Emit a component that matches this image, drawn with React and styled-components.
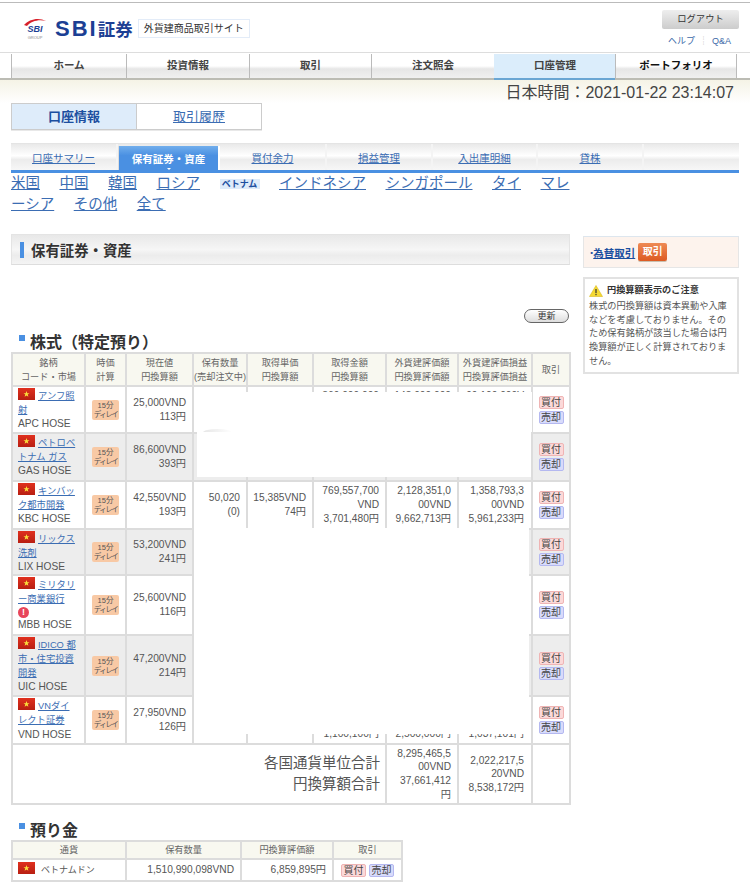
import React from 'react';
import styled, { createGlobalStyle } from 'styled-components';

const GlobalStyle = createGlobalStyle`
    html, body {
        margin: 0;
        padding: 0;
        background: #fff;
    }
    body {
        font-family: "Liberation Sans", "Noto Sans CJK JP", sans-serif;
        color: #555;
    }
`;

const Page = styled.div`
    width: 750px;
    height: 889px;
    overflow: hidden;
    border-top: 1px solid #bbb;
    margin-top: 2px;
    box-sizing: border-box;
`;

const Header = styled.header`
    display: flex;
    justify-content: space-between;
    height: 49px;
    padding: 0 11px 0 23px;
`;

const Brand = styled.div`
    display: flex;
    align-items: center;
    padding-top: 2px;
    gap: 4px;
`;

const BrandName = styled.span`
    font-size: 22px;
    font-weight: bold;
    color: #1c3f94;
    letter-spacing: 2px;
    margin-left: 4px;
    white-space: nowrap;
`;

const BrandKanji = styled.span`
    font-size: 17.5px;
    letter-spacing: 0;
`;

const SiteBadge = styled.span`
    font-size: 10px;
    color: #333;
    border: 1px solid #e3ecf8;
    padding: 2px 5px;
    margin-left: 1px;
    line-height: 13px;
`;

const HeaderRight = styled.div`
    display: flex;
    flex-direction: column;
    align-items: flex-end;
    padding-top: 7px;
`;

const LogoutButton = styled.div`
    width: 77px;
    height: 19px;
    line-height: 19px;
    text-align: center;
    font-size: 9.3px;
    color: #333;
    background: linear-gradient(#eee, #ccc);
    border-radius: 2px;
`;

const HelpLinks = styled.div`
    margin-top: 5px;
    margin-right: 8px;
    font-size: 9px;
    color: #3d6aa8;
    span {
        color: #bbb;
        margin: 0 4px;
    }
`;

const GlobalNav = styled.nav`
    display: flex;
    height: 25px;
    padding-left: 11px;
    border-top: 1px solid #ddd;
    border-bottom: 2px solid #bcbcb4;
`;

const NavItem = styled.div`
    width: ${props => props.$width}px;
    box-sizing: border-box;
    margin-top: 1px;
    text-align: center;
    line-height: 22px;
    font-size: 10.5px;
    font-weight: bold;
    color: ${props => props.$strong ? '#111' : '#444'};
    background: ${props => props.$active
        ? '#dbedfb'
        : 'linear-gradient(#fff 0, #fff 50%, #e6e6e6 62%, #f0f0f0 100%)'};
    border-left: 1px solid ${props => props.$active ? '#dbedfb' : '#bbb'};
    border-right: ${props => props.$last ? '1px solid #bbb' : 'none'};
    box-shadow: ${props => props.$active ? '0 2px 0 #6aa6d3' : 'none'};
`;

const TimeBar = styled.div`
    height: 23px;
    padding-right: 16px;
    text-align: right;
    font-size: 16px;
    line-height: 25px;
    color: #444;
    background: linear-gradient(#f5f3e6, #fff);
`;

const AccountTabs = styled.div`
    display: flex;
    width: 251px;
    height: 27px;
    margin: 0 0 13px 11px;
    box-sizing: border-box;
    border: 1px solid #ccc;
    box-shadow: 0 1px 0 #e8e8e8;
`;

const AccountTab = styled.div`
    width: ${props => props.$width}px;
    box-sizing: border-box;
    text-align: center;
    font-size: 13px;
    line-height: 25px;
    ${props => props.$active
        ? 'font-weight: bold; color: #1c4fa0; background: #deecfa; border-right: 1px solid #ccc;'
        : 'color: #3b6db3; text-decoration: underline;'}
`;

const SubNav = styled.div`
    display: flex;
    width: 728px;
    height: 30px;
    margin-left: 11px;
    box-sizing: border-box;
    border-top: 1px solid #e4e4e4;
    border-bottom: 3px solid #4a90e2;
    background: linear-gradient(#e9e9e9, #fff 45%, #ececec 60%, #f7f7f7);
`;

const SubNavItem = styled.div`
    width: ${props => props.$width}px;
    box-sizing: border-box;
    text-align: center;
    font-size: 10.5px;
    line-height: 28px;
    ${props => props.$active
        ? `margin-top: 2px; line-height: 27px; color: #fff; font-weight: bold; position: relative;
           background: linear-gradient(#71aeec, #4a90e2 40%);
           &::after {
               content: '';
               position: absolute;
               left: 50%;
               bottom: 0;
               margin-left: -2px;
               border: 2px solid transparent;
               border-top-color: #fff;
               border-bottom: none;
           }`
        : 'color: #3b6db3; text-decoration: underline;'}
    border-right: ${props => props.$active ? '2px solid #fff' : '2px solid #f4f4f4'};
    border-left: ${props => props.$active ? '1px solid #ddd' : 'none'};
`;

const CountryLinks = styled.div`
    margin: 0 0 0 11px;
    width: 562px;
    height: 61px;
    padding-top: 0;
    font-size: 14.5px;
    line-height: 20.5px;
`;

const CountryLink = styled.a`
    color: #3b6db3;
    text-decoration: underline;
    margin-right: 19.5px;
`;

const CurrentCountry = styled.span`
    display: inline-block;
    width: 40px;
    margin-right: 19.5px;
    font-size: 9px;
    line-height: 10px;
    font-weight: bold;
    text-align: center;
    color: #1c4fa0;
    background: #deebfa;
    vertical-align: 1px;
`;

const Columns = styled.div`
    display: flex;
    gap: 13px;
    padding-left: 11px;
`;

const MainColumn = styled.main`
    width: 559px;
    flex: none;
`;

const SideColumn = styled.aside`
    width: 156px;
    flex: none;
    padding-top: 2px;
`;

const TitleBar = styled.h1`
    display: flex;
    align-items: center;
    gap: 7px;
    height: 31px;
    margin: 0;
    padding-left: 8px;
    box-sizing: border-box;
    font-size: 14.4px;
    font-weight: bold;
    color: #333;
    border: 1px solid #e4e4e4;
    border-bottom-color: #ddd;
    background: linear-gradient(#e8e8e8, #f6f6f6 50%, #ececec 70%, #f4f4f4);
    &::before {
        content: '';
        width: 4px;
        height: 16px;
        background: #4a90e2;
    }
`;

const RefreshRow = styled.div`
    display: flex;
    justify-content: flex-end;
    padding: 44px 1px 0 0;
`;

const RefreshButton = styled.div`
    width: 45px;
    height: 14px;
    box-sizing: border-box;
    border: 1px solid #666;
    border-radius: 8px;
    background: linear-gradient(#fff, #ddd);
    text-align: center;
    font-size: 9px;
    line-height: 12px;
    color: #333;
`;

const SectionTitle = styled.h2`
    position: relative;
    margin: ${props => props.$top}px 0 0;
    padding-left: 19px;
    font-size: 16px;
    line-height: 18px;
    font-weight: bold;
    color: #333;
    &::before {
        content: '';
        position: absolute;
        left: 8px;
        top: 1px;
        width: 6px;
        height: 6px;
        background: #4a90e2;
    }
`;

const TableWrap = styled.div`
    position: relative;
`;

const Table = styled.table`
    width: ${props => props.$width}px;
    table-layout: fixed;
    border-collapse: collapse;
    font-size: 10.2px;
    line-height: 13.7px;
    color: #555;
    th, td {
        border: 2px solid #dcdcdc;
        padding: 0 6px 0 5px;
        box-sizing: border-box;
    }
    th {
        background: #f8f8f0;
        font-weight: normal;
        text-align: center;
        font-size: 9.2px;
        line-height: 14px;
        padding: 0;
        white-space: nowrap;
        color: #666;
    }
`;

const Row = styled.tr`
    height: ${props => props.$height}px;
    background: ${props => props.$shade ? '#ededed' : '#fff'};
`;

const NameCell = styled.td`
    vertical-align: top;
    padding: 2px 6px 0 5px !important;
    word-break: break-all;
    font-size: 9.3px;
`;

const StockCode = styled.div`
    font-size: 10.2px;
`;

const CurrencyCell = styled.td`
    padding-left: 5px !important;
    font-size: 9px;
`;

const CurrencyName = styled.span`
    margin-left: 3px;
`;

const Flag = ({ className }) => (
    <svg className={className} viewBox="0 0 17 12" width="17" height="12">
        <defs>
            <linearGradient id="flagRed" x1="0" y1="0" x2="0" y2="1">
                <stop offset="0" stopColor="#e0301e" />
                <stop offset="1" stopColor="#b81f12" />
            </linearGradient>
        </defs>
        <rect width="17" height="12" fill="url(#flagRed)" />
        <path d="M8.5 3 9.3 5.2 11.5 5.2 9.7 6.6 10.4 8.8 8.5 7.5 6.6 8.8 7.3 6.6 5.5 5.2 7.7 5.2Z" fill="#fadf3c" />
    </svg>
);

const StyledFlag = styled(Flag)`
    display: inline-block;
    vertical-align: 1px;
    margin: -1px 3px -2px 0;
`;

const StockLink = styled.a`
    color: #3b6db3;
    text-decoration: underline;
`;

const WarnDot = styled.div`
    width: 11px;
    height: 11px;
    border-radius: 50%;
    background: #e8455a;
    color: #fff;
    font-size: 9px;
    line-height: 11px;
    font-weight: bold;
    text-align: center;
`;

const CenterCell = styled.td`
    text-align: center;
    padding: 0 !important;
`;

const DelayBadge = styled.div`
    width: 27px;
    margin: 0 auto;
    padding: 1px 0;
    border-radius: 2px;
    background: #f8c9a5;
    font-size: 7.5px;
    line-height: 9px;
    color: #555;
    white-space: nowrap;
`;

const DelayWord = styled.span`
    letter-spacing: -1.5px;
`;

const NumCell = styled.td`
    text-align: right;
    word-break: break-all;
    padding: ${props => props.$inset ? '0 7px 0 6px' : '0 6px 0 5px'} !important;
`;

const TradeStack = styled.div`
    display: flex;
    flex-direction: ${props => props.$row ? 'row' : 'column'};
    align-items: center;
    justify-content: center;
    gap: ${props => props.$row ? 3 : 2}px;
`;

const TradeButton = styled.span`
    display: block;
    width: 25px;
    height: 13px;
    box-sizing: border-box;
    border: 1px solid ${props => props.$sell ? '#b4b8f0' : '#efb4b4'};
    border-radius: 2px;
    background: ${props => props.$sell ? '#d8dbfb' : '#fbd9d9'};
    font-size: 10px;
    line-height: 11px;
    text-align: center;
    color: #444;
`;

const TotalLabel = styled.td`
    text-align: right;
    font-size: 14.5px;
    line-height: 21.5px;
    padding-right: 5px !important;
`;

const Mask = styled.div`
    position: absolute;
    left: ${props => props.$left}px;
    top: ${props => props.$top}px;
    width: ${props => props.$width}px;
    height: ${props => props.$height}px;
    background: #fff;
`;

const Smudge = styled.div`
    position: absolute;
    left: 9px;
    top: 37px;
    width: 29px;
    height: 7px;
    background: linear-gradient(100deg, #e6e6e6, #fff);
    border-radius: 50%;
`;

const FxBox = styled.div`
    display: flex;
    align-items: center;
    height: 32px;
    box-sizing: border-box;
    padding-left: 5px;
    border: 1px solid #e6e6e6;
    border-top-color: #dde6ee;
    background: #fdf3ed;
    font-size: 10.5px;
    font-weight: bold;
    color: #1c4fa0;
`;

const FxLink = styled.a`
    text-decoration: underline;
    color: #1c4fa0;
    margin: 0 3px 0 -1px;
`;

const FxButton = styled.span`
    width: 29px;
    height: 18px;
    line-height: 18px;
    text-align: center;
    font-size: 10px;
    border-radius: 2px;
    color: #fff;
    background: linear-gradient(#ee8a55, #dd5a22);
    box-shadow: 0 1px 0 #c9c0b0;
`;

const NoticeBox = styled.div`
    margin-top: 9px;
    height: 97px;
    box-sizing: border-box;
    padding: 5px 4px 0 4px;
    border: 2px solid #e2e2e2;
    font-size: 9.2px;
    line-height: 13.8px;
    color: #555;
`;

const NoticeTitle = styled.div`
    display: flex;
    align-items: center;
    gap: 4px;
    margin-bottom: 2px;
    font-weight: bold;
    color: #333;
`;

const WarningIcon = () => (
    <svg viewBox="0 0 14 12" width="14" height="12">
        <path d="M7 0.5 13.5 11.5H0.5Z" fill="#f5d932" stroke="#d8b820" strokeWidth="0.6" />
        <rect x="6.4" y="4" width="1.2" height="4.2" fill="#333" />
        <rect x="6.4" y="9" width="1.2" height="1.2" fill="#333" />
    </svg>
);

const SbiMark = () => (
    <svg viewBox="0 0 24 28" width="24" height="28">
        <path d="M1 10C6 4 16 2 23 6 16 4 8 6 4 11Z" fill="#d8202a" />
        <text x="12" y="17" textAnchor="middle" fontSize="9" fontStyle="italic" fontWeight="bold" fill="#1c3f94" fontFamily="Liberation Sans">SBI</text>
        <text x="12" y="24" textAnchor="middle" fontSize="4" fill="#888" fontFamily="Liberation Sans">GROUP</text>
    </svg>
);

const stocks = [
    {
        name: 'アンフ照射', code: 'APC HOSE', price: '25,000VND', yen: '113円', height: 47,
        cost: '369,000,000VND', costYen: '1,700,000円',
        value: '143,000,000VND', valueYen: '649,000円',
        gain: '99,100,000VND', gainYen: '450,000円',
    },
    { name: 'ペトロベトナム ガス', code: 'GAS HOSE', price: '86,600VND', yen: '393円', height: 48 },
    {
        name: 'キンバック都市開発', code: 'KBC HOSE', price: '42,550VND', yen: '193円', height: 48,
        qty: ['50,020', '(0)'], unit: ['15,385VND', '74円'],
        cost: '769,557,700VND', costYen: '3,701,480円',
        value: '2,128,351,000VND', valueYen: '9,662,713円',
        gain: '1,358,793,300VND', gainYen: '5,961,233円',
    },
    { name: 'リックス洗剤', code: 'LIX HOSE', price: '53,200VND', yen: '241円', height: 46 },
    { name: 'ミリタリー商業銀行', code: 'MBB HOSE', price: '25,600VND', yen: '116円', height: 60, warn: true },
    { name: 'IDICO 都市・住宅投資開発', code: 'UIC HOSE', price: '47,200VND', yen: '214円', height: 61 },
    {
        name: 'VNダイレクト証券', code: 'VND HOSE', price: '27,950VND', yen: '126円', height: 48,
        cost: '369,000,000VND', costYen: '1,100,100円',
        value: '1,143,000,000VND', valueYen: '2,500,000円',
        gain: '1,143,000,000VND', gainYen: '1,037,101円',
    },
];

const Trade = ({ row }) => (
    <TradeStack $row={row}>
        <TradeButton>買付</TradeButton>
        <TradeButton $sell>売却</TradeButton>
    </TradeStack>
);

const StockRow = ({ stock, shade }) => (
    <Row $height={stock.height} $shade={shade}>
        <NameCell>
            <StyledFlag />
            <StockLink>{stock.name}</StockLink>
            {stock.warn && <WarnDot>!</WarnDot>}
            <StockCode>{stock.code}</StockCode>
        </NameCell>
        <CenterCell>
            <DelayBadge>15分<br /><DelayWord>ディレイ</DelayWord></DelayBadge>
        </CenterCell>
        <NumCell>{stock.price}<br />{stock.yen}</NumCell>
        <NumCell>{stock.qty && <>{stock.qty[0]}<br />{stock.qty[1]}</>}</NumCell>
        <NumCell>{stock.unit && <>{stock.unit[0]}<br />{stock.unit[1]}</>}</NumCell>
        <NumCell>{stock.cost}<br />{stock.costYen}</NumCell>
        <NumCell>{stock.value}<br />{stock.valueYen}</NumCell>
        <NumCell $inset>{stock.gain}<br />{stock.gainYen}</NumCell>
        <CenterCell><Trade /></CenterCell>
    </Row>
);

const navItems = [
    { label: 'ホーム', width: 115 },
    { label: '投資情報', width: 123 },
    { label: '取引', width: 122 },
    { label: '注文照会', width: 123 },
    { label: '口座管理', width: 121, active: true },
    { label: 'ポートフォリオ', width: 122, strong: true, last: true },
];

const subNavItems = [
    { label: '口座サマリー', width: 107 },
    { label: '保有証券・資産', width: 102, active: true },
    { label: '買付余力', width: 107 },
    { label: '損益管理', width: 106 },
    { label: '入出庫明細', width: 105 },
    { label: '貸株', width: 106 },
];

const columnWidths = [73, 41, 67, 54, 66, 73, 72, 74, 38];

const App = () => {
    return (
        <Page>
            <GlobalStyle />
            <Header>
                <Brand>
                    <SbiMark />
                    <BrandName>SBI<BrandKanji>証券</BrandKanji></BrandName>
                    <SiteBadge>外貨建商品取引サイト</SiteBadge>
                </Brand>
                <HeaderRight>
                    <LogoutButton>ログアウト</LogoutButton>
                    <HelpLinks>ヘルプ<span>┊</span>Q&amp;A</HelpLinks>
                </HeaderRight>
            </Header>
            <GlobalNav>
                {navItems.map(item => (
                    <NavItem key={item.label} $width={item.width} $active={item.active} $strong={item.strong} $last={item.last}>
                        {item.label}
                    </NavItem>
                ))}
            </GlobalNav>
            <TimeBar>日本時間：2021-01-22 23:14:07</TimeBar>
            <AccountTabs>
                <AccountTab $width={125} $active>口座情報</AccountTab>
                <AccountTab $width={124}>取引履歴</AccountTab>
            </AccountTabs>
            <SubNav>
                {subNavItems.map(item => (
                    <SubNavItem key={item.label} $width={item.width} $active={item.active}>{item.label}</SubNavItem>
                ))}
            </SubNav>
            <CountryLinks>
                <CountryLink>米国</CountryLink>
                <CountryLink>中国</CountryLink>
                <CountryLink>韓国</CountryLink>
                <CountryLink>ロシア</CountryLink>
                <CurrentCountry>ベトナム</CurrentCountry>
                <CountryLink>インドネシア</CountryLink>
                <CountryLink>シンガポール</CountryLink>
                <CountryLink>タイ</CountryLink>
                <CountryLink>マレ<br />ーシア</CountryLink>
                <CountryLink>その他</CountryLink>
                <CountryLink>全て</CountryLink>
            </CountryLinks>
            <Columns>
                <MainColumn>
                    <TitleBar>保有証券・資産</TitleBar>
                    <RefreshRow>
                        <RefreshButton>更新</RefreshButton>
                    </RefreshRow>
                    <SectionTitle $top={11}>株式（特定預り）</SectionTitle>
                    <TableWrap>
                        <Table $width={558}>
                            <colgroup>
                                {columnWidths.map((width, i) => <col key={i} style={{ width }} />)}
                            </colgroup>
                            <thead>
                                <tr style={{ height: 33 }}>
                                    <th>銘柄<br />コード・市場</th>
                                    <th>時価<br />計算</th>
                                    <th>現在値<br />円換算額</th>
                                    <th>保有数量<br />(売却注文中)</th>
                                    <th>取得単価<br />円換算額</th>
                                    <th>取得金額<br />円換算額</th>
                                    <th>外貨建評価額<br />円換算評価額</th>
                                    <th>外貨建評価損益<br />円換算評価損益</th>
                                    <th>取引</th>
                                </tr>
                            </thead>
                            <tbody>
                                {stocks.map((stock, i) => (
                                    <StockRow key={stock.code} stock={stock} shade={i % 2 === 1} />
                                ))}
                                <Row $height={60}>
                                    <TotalLabel colSpan={6}>各国通貨単位合計<br />円換算額合計</TotalLabel>
                                    <NumCell>8,295,465,500VND<br />37,661,412円</NumCell>
                                    <NumCell $inset>2,022,217,520VND<br />8,538,172円</NumCell>
                                    <td />
                                </Row>
                            </tbody>
                        </Table>
                        <Mask $left={183} $top={40} $width={338} $height={40}>
                            <Smudge />
                        </Mask>
                        <Mask $left={186} $top={80} $width={334} $height={45} />
                        <Mask $left={183} $top={176} $width={335} $height={206} />
                    </TableWrap>
                    <SectionTitle $top={17}>預り金</SectionTitle>
                    <TableWrap>
                        <Table $width={390}>
                            <colgroup>
                                {[114, 115, 92, 69].map((width, i) => <col key={i} style={{ width }} />)}
                            </colgroup>
                            <thead>
                                <tr style={{ height: 18 }}>
                                    <th>通貨</th>
                                    <th>保有数量</th>
                                    <th>円換算評価額</th>
                                    <th>取引</th>
                                </tr>
                            </thead>
                            <tbody>
                                <Row $height={22}>
                                    <CurrencyCell><StyledFlag /><CurrencyName>ベトナムドン</CurrencyName></CurrencyCell>
                                    <NumCell>1,510,990,098VND</NumCell>
                                    <NumCell>6,859,895円</NumCell>
                                    <CenterCell><Trade row /></CenterCell>
                                </Row>
                            </tbody>
                        </Table>
                    </TableWrap>
                </MainColumn>
                <SideColumn>
                    <FxBox>
                        ･<FxLink>為替取引</FxLink>
                        <FxButton>取引</FxButton>
                    </FxBox>
                    <NoticeBox>
                        <NoticeTitle><WarningIcon />円換算額表示のご注意</NoticeTitle>
                        株式の円換算額は資本異動や入庫などを考慮しておりません。そのため保有銘柄が該当した場合は円換算額が正しく計算されておりません。
                    </NoticeBox>
                </SideColumn>
            </Columns>
        </Page>
    );
};

export default App;
